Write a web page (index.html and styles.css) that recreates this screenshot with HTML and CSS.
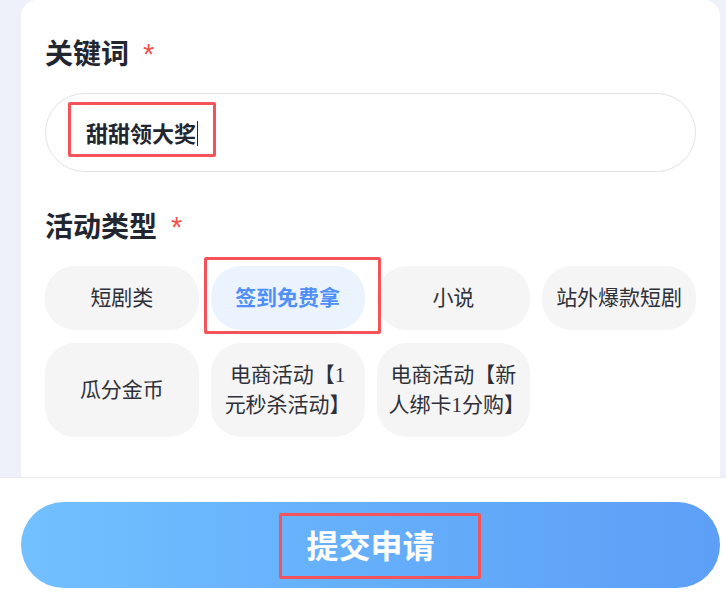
FILE: index.html
```html
<!DOCTYPE html>
<html lang="zh-CN">
<head>
<meta charset="utf-8">
<title>提交申请</title>
<link rel="stylesheet" href="styles.css">
</head>
<body>
<main class="page">
  <section class="card">
    <div class="field">
      <h2 class="label">关键词<span class="req">*</span></h2>
      <div class="input">
        <span class="value">甜甜领大奖<span class="caret"></span><span class="mark mark-input"></span></span>
      </div>
    </div>
    <div class="field field-type">
      <h2 class="label">活动类型<span class="req">*</span></h2>
      <div class="chips">
        <div class="chip">短剧类</div>
        <div class="chip active">签到免费拿<span class="mark mark-chip"></span></div>
        <div class="chip">小说</div>
        <div class="chip">站外爆款短剧</div>
        <div class="chip">瓜分金币</div>
        <div class="chip">电商活动【1元秒杀活动】</div>
        <div class="chip">电商活动【新人绑卡1分购】</div>
      </div>
    </div>
  </section>
  <footer class="footer">
    <button class="submit" type="button"><span class="submit-text">提交申请<span class="mark mark-btn"></span></span></button>
  </footer>
</main>
</body>
</html>
```

FILE: styles.css
```css
* { box-sizing: border-box; }

html, body {
  margin: 0;
  padding: 0;
}

body {
  background: #eef1f9;
  font-family: "Noto Sans CJK SC", "Noto Sans", sans-serif;
  color: #222631;
}

.page {
  width: 726px;
  height: 598px;
  overflow: hidden;
  display: flex;
  flex-direction: column;
}

.card {
  margin: 0 6px 0 21px;
  background: #ffffff;
  border-radius: 16px 16px 0 0;
  padding: 32px 24px 40px 24px;
}

.label {
  margin: 0 0 21px 0;
  height: 40px;
  font-size: 28px;
  line-height: 40px;
  font-weight: 700;
  color: #222631;
  display: flex;
  align-items: flex-start;
}

.req {
  color: #f4524d;
  font-size: 29px;
  line-height: 36px;
  margin-left: 14px;
  margin-top: 4px;
  font-weight: 400;
  font-family: "Liberation Sans", sans-serif;
}

.input {
  height: 79px;
  border: 1px solid #e2e3e7;
  border-radius: 40px;
  padding: 0 40px;
  display: flex;
  align-items: center;
}

.value {
  position: relative;
  display: inline-flex;
  align-items: center;
  font-size: 22px;
  line-height: 30px;
  font-weight: 700;
  color: #222631;
  margin-top: -2px;
}

.caret {
  display: inline-block;
  width: 1px;
  height: 25px;
  margin-left: 1px;
  margin-top: 4px;
  background: #222631;
}

.mark {
  position: absolute;
  border: 3px solid #f5535a;
  border-radius: 2px;
  z-index: 2;
  pointer-events: none;
}

.mark-input {
  left: -18px;
  right: -18px;
  top: -15px;
  bottom: -10px;
}

.field-type {
  margin-top: 33px;
}

.chips {
  display: grid;
  grid-template-columns: repeat(4, 1fr);
  gap: 13px 12px;
}

.chip {
  position: relative;
  background: #f5f5f6;
  border-radius: 30px;
  padding: 17px 12px;
  display: flex;
  align-items: center;
  justify-content: center;
  text-align: center;
  font-family: "Liberation Serif", "Noto Sans CJK SC", serif;
  font-size: 21px;
  line-height: 30px;
  color: #2e3038;
}

.chip.active {
  background: #ebf3ff;
  color: #4f8ff7;
  font-weight: 700;
}

.mark-chip {
  left: -7px;
  right: -16px;
  top: -9px;
  bottom: -4px;
}

.footer {
  flex: 1;
  background: #ffffff;
  border-top: 1px solid #e9ebf0;
  padding: 24px 6px 0 21px;
}

.submit {
  width: 100%;
  height: 86px;
  border: none;
  border-radius: 43px;
  background: linear-gradient(90deg, #72c0ff 0%, #66b0fb 45%, #5d9ff7 100%);
  color: #ffffff;
  font-family: "Noto Sans CJK SC", sans-serif;
  font-size: 32px;
  font-weight: 700;
  display: flex;
  align-items: center;
  justify-content: center;
  padding: 0;
  cursor: pointer;
}

.submit-text {
  position: relative;
  display: inline-block;
  line-height: 32px;
  margin-top: -3px;
}

.mark-btn {
  left: -27px;
  right: -46px;
  top: -15px;
  bottom: -19px;
}
```
